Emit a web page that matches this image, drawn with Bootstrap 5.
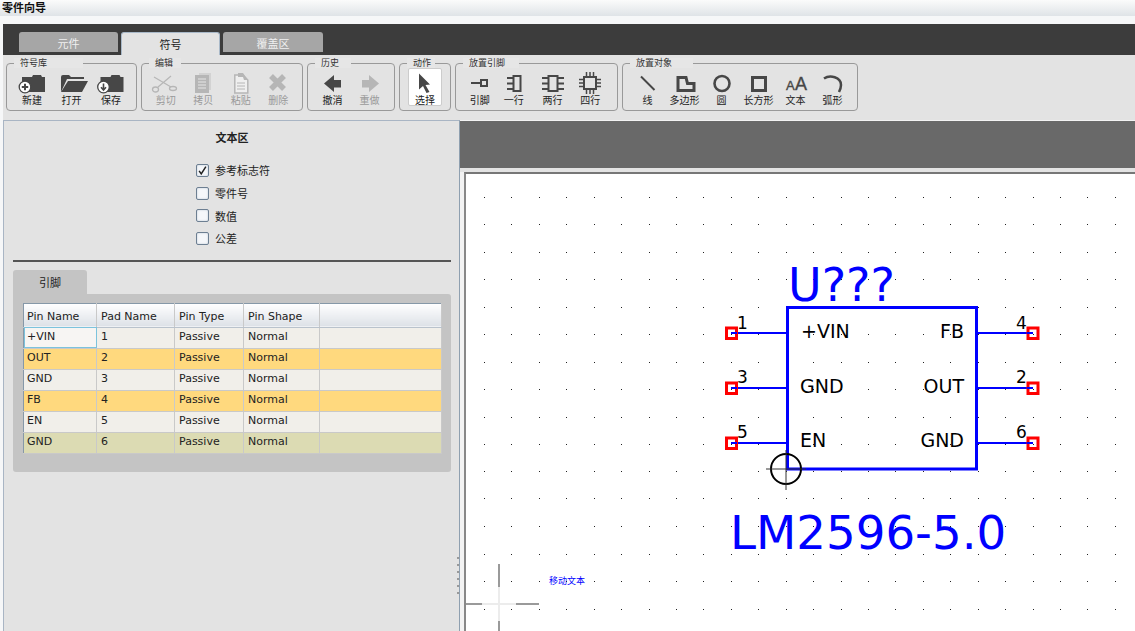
<!DOCTYPE html>
<html lang="zh">
<head>
<meta charset="utf-8">
<title>零件向导</title>
<link href="https://cdn.jsdelivr.net/npm/bootstrap@5.3.0/dist/css/bootstrap.min.css" rel="stylesheet">
<style>
html,body{height:631px;overflow:hidden}
body{background:#f6f7f8;color:#222;font:11px/1.2 "DejaVu Sans","Noto Sans CJK SC",sans-serif;-webkit-font-smoothing:antialiased}
.cjk,.tool-btn,.grp-legend,.title-bar,.tab-link,.chk-label,.panel-title{font-family:"Noto Sans CJK SC","Liberation Sans",sans-serif}
.title-bar{height:16px;line-height:15px;padding-left:2px;font-size:11px;font-weight:700;color:#111;background:linear-gradient(#fbfbfb,#dfe3e7)}
.shell{margin-top:8px;padding-left:3px;height:607px}
.tab-band{height:31px;background:#3c3c3c;padding:8px 0 0 16px;gap:3px;align-items:flex-start}
.tab-link{display:block;width:99px;height:20px;padding:0;text-align:center;line-height:22px;font-size:11px;color:#f0f0f0;background:#a6a6a6;border-radius:3px 3px 0 0}
.tab-link.cur{height:23px;background:#e3e3e3;color:#222;border:1px solid #a9b9c9;border-bottom:0}
.tab-wide{width:100px}
.tool-strip{height:65px;background:#e3e3e3;padding:3px 0 0 3px;gap:4px}
.grp{border:1px solid #999;border-radius:4px;height:53px;padding:0;display:flex;justify-content:center;min-width:0}
fieldset.grp{border:1px solid #999;padding:0;margin:0}
legend.grp-legend{float:none;margin:0 0 0 7px;padding:0 0 0 6px;font-size:9px;line-height:10px;height:10px;color:#333;background:#e6e6e6}
.tool-btn.btn{width:37px;height:38px;padding:3px 0 0;border:1px solid transparent;border-radius:2px;font-size:10px;line-height:12px;color:#222;display:flex;flex-direction:column;align-items:center;white-space:nowrap;--bs-btn-hover-bg:transparent}
.tool-btn svg{flex:none;width:30px;height:22px;overflow:visible}
.tool-btn.btn:disabled{opacity:1;color:#9a9a9a}
.tool-btn.picked{background:#fff;border-color:#ccc;width:34px}
.ink{fill:#474747}
.inkline{fill:none;stroke:#474747}
.off{fill:#b6b6b6}
.offline{fill:none;stroke:#b6b6b6}
.w40{width:39.5px!important}.w375{width:37.5px!important}
.w30{width:30px!important}.w38{width:38px!important}.w36{width:36px!important}
.workarea{height:511px;margin-top:0}
.side{width:457px;height:511px;background:#e3e3e3;border-top:1px solid #a9b5c4;border-left:1px solid #a9b5c4;border-right:1px solid #8fa0b0;flex:none;padding:0 8px 0 9px;position:relative}
.panel-title{font-size:11px;font-weight:700;text-align:center;line-height:14px;padding-top:9px;height:38px}
.chk-col{width:fit-content;margin:0 auto 0 183px}
.form-check.chk-row{height:22.7px;min-height:0;margin:0;padding:0;display:flex;align-items:center;gap:6px}
.chk-row .form-check-input{float:none;margin:0;width:13px;height:13px;border:1px solid #6d7f92;background-color:#f5f7fa;box-shadow:inset 0 0 2px #b9c4d2}
.chk-row .form-check-input[type=checkbox]{border-radius:2px}
.chk-row .form-check-input:checked{background-color:#f5f7fa;border-color:#6d7f92;background-image:url("data:image/svg+xml,%3Csvg xmlns='http://www.w3.org/2000/svg' viewBox='0 0 13 13'%3E%3Cpath d='M2.5 7l2.5 3.5L10.5 2' fill='none' stroke='%23222' stroke-width='1.8'/%3E%3C/svg%3E")}
.chk-label{font-size:11px;line-height:14px;color:#222;margin:0}
.rule{height:2px;background:#555;margin:10px 0 8px;opacity:1;border:0}
.pin-tab{display:block;width:74px;height:24px;line-height:24px;text-align:center;background:#c4c4c4;border-radius:3px 3px 0 0;font-size:11px;color:#222;padding:0}
.pin-box{background:#c4c4c4;border-radius:0 3px 3px 3px;height:178px;padding:9px 9px 0 10px}
.pin-grid.table{width:419px;table-layout:fixed;margin:0;border:1px solid #8698a8;border-collapse:collapse;font-size:11px;color:#222;--bs-table-bg:#f1efea}
.pin-grid.table>:not(caption)>*>*{padding:0 0 2px 4px;height:21px;line-height:17px;vertical-align:middle;border:1px solid #c9c9c9;border-width:0 1px 1px 0;font-weight:400;color:#222;box-shadow:none;background:var(--row-bg,#f1efea)}
.pin-grid.table>thead>tr>th{height:23px;padding:2px 0 0 4px;background:linear-gradient(#fff,#dde1e7);border-bottom:1px solid #b9c2cc;line-height:21px}
.pin-grid.table>:not(caption)>tr>:first-child{padding-left:3px}
.pin-warn{--row-bg:#ffd97e}
.pin-dup{--row-bg:#dcdbb3}
.pin-grid.table>tbody>tr>td.cell-on{background:#f7f5f3;outline:1px solid #7cc3dd;outline-offset:-1px}
.splitter{position:absolute;right:0;top:436px;width:2px;height:38px;background:repeating-linear-gradient(#9a9a9a 0 2px,transparent 2px 7px)}
.main-pane{flex:1;min-width:0;height:511px;display:flex;flex-direction:column;background:#f3f3f3}
.gray-bar{height:47px;background:#696969;flex:none;margin-top:1px}
.gap-bar{height:4px;background:#e3e3e3;flex:none}
.sheet{flex:1;margin-left:4px;background:#fff;border-left:2px solid #888;border-top:2px solid #777;overflow:hidden;min-height:0}
.sheet svg{display:block}
.lbl{font-family:"DejaVu Sans",sans-serif;fill:#000}
</style>
</head>
<body>
<div class="title-bar">零件向导</div>
<div class="shell d-flex flex-column">
  <ul class="nav tab-band flex-nowrap">
    <li class="nav-item"><a class="nav-link tab-link">元件</a></li>
    <li class="nav-item"><a class="nav-link tab-link cur">符号</a></li>
    <li class="nav-item"><a class="nav-link tab-link tab-wide">覆盖区</a></li>
  </ul>
  <div class="tool-strip d-flex">
    <fieldset class="grp" style="width:131px">
      <legend class="grp-legend" style="width:69px">符号库</legend>
      <button class="btn tool-btn w40"><svg viewBox="0 0 30 22"><path class="ink" d="M5 5h10l1-2h8l1 2h3v15H5z"/><circle cx="8" cy="15" r="5.8" fill="#fff" stroke="#474747" stroke-width="1.3"/><path class="inkline" stroke-width="2" d="M4.8 15h6.4M8 11.8v6.4"/></svg>新建</button>
      <button class="btn tool-btn w40"><svg viewBox="0 0 30 22"><path class="ink" d="M4 20V5q0-2 2-2h6l2 2h13v2H10z"/><path class="ink" d="M11 9h20l-6 11H4z"/></svg>打开</button>
      <button class="btn tool-btn w40"><svg viewBox="0 0 30 22"><path class="ink" d="M5 5h10l1-2h8l1 2h3v15H5z" transform="translate(-.5)"/><circle cx="7.500" cy="15" r="5.8" fill="#fff" stroke="#474747" stroke-width="1.300"/><path class="inkline" stroke-width="1.600" d="M7.500 11.500v6M5 15.300l2.500 2.700 2.500-2.700"/></svg>保存</button>
    </fieldset>
    <fieldset class="grp" style="width:162px">
      <legend class="grp-legend" style="width:32px">编辑</legend>
      <button class="btn tool-btn w375" disabled><svg viewBox="0 0 30 22"><path class="offline" stroke-width="1.200" d="M3 5l17 10M20 4L7 15"/><ellipse class="offline" stroke-width="1.300" cx="4.500" cy="17.500" rx="3" ry="2.500"/><ellipse class="offline" stroke-width="1.300" cx="22" cy="16.500" rx="3.500" ry="2"/></svg>剪切</button>
      <button class="btn tool-btn w375" disabled><svg viewBox="0 0 30 22"><path fill="#d2d2d2" d="M11 1h12v17H11z"/><path class="off" d="M7 3h14v18H7z"/><path stroke="#e6e6e6" d="M10 7h8M10 10h8M10 13h8M10 16h8"/></svg>拷贝</button>
      <button class="btn tool-btn w375" disabled><svg viewBox="0 0 30 22"><path fill="#efefef" stroke="#b6b6b6" stroke-width="1.500" d="M8.800 3h8l5 5v13h-13z"/><path class="off" d="M12 1h5l5 7h-4l-1-3h-5z"/><path stroke="#b6b6b6" d="M11 11h8M11 14h8M11 17h8"/></svg>粘贴</button>
      <button class="btn tool-btn w375" disabled><svg viewBox="0 0 30 22"><path class="offline" stroke-width="5.500" d="M8 4l13 13M21 4L8 17"/></svg>删除</button>
    </fieldset>
    <fieldset class="grp" style="width:88px">
      <legend class="grp-legend" style="width:36px">历史</legend>
      <button class="btn tool-btn"><svg viewBox="0 0 30 22"><path class="ink" d="M6 11.500L16 3v5h7v7.500h-7V20z"/></svg>撤消</button>
      <button class="btn tool-btn" disabled><svg viewBox="0 0 30 22"><path class="off" d="M24 11.500L14 3v5H7v7.500h7V20z"/></svg>重做</button>
    </fieldset>
    <fieldset class="grp" style="width:52px">
      <legend class="grp-legend" style="width:28px">动作</legend>
      <button class="btn tool-btn picked"><svg viewBox="0 0 30 22"><path class="ink" d="M9 1.500l11 11-4.500.5 4 7-3 1-3.500-7-4 3.500z"/></svg>选择</button>
    </fieldset>
    <fieldset class="grp" style="width:163px">
      <legend class="grp-legend" style="width:56px">放置引脚</legend>
      <button class="btn tool-btn w30"><svg viewBox="0 0 30 22"><path class="inkline" stroke-width="2" d="M6 11h9"/><rect class="inkline" stroke-width="2" x="16" y="8" width="6" height="6"/></svg>引脚</button>
      <button class="btn tool-btn w38"><svg viewBox="0 0 30 22"><rect class="inkline" stroke-width="2" x="14.500" y="4" width="7" height="15"/><path class="inkline" stroke-width="2" d="M8 6h6M8 11.500h6M8 17h6"/></svg>一行</button>
      <button class="btn tool-btn w40"><svg viewBox="0 0 30 22"><rect class="inkline" stroke-width="2" x="10.500" y="4" width="9" height="15"/><path class="inkline" stroke-width="2" d="M4 6h6M4 11.500h6M4 17h6M20 6h6M20 11.500h6M20 17h6"/></svg>两行</button>
      <button class="btn tool-btn w36"><svg viewBox="0 0 30 22"><rect class="inkline" stroke-width="2" x="9" y="5" width="12" height="12"/><path class="inkline" stroke-width="1.500" d="M4 7.500h5M4 11h5M4 14.500h5M21 7.500h5M21 11h5M21 14.500h5M11.500 0v5M15 0v5M18.500 0v5M11.500 17v5M15 17v5M18.500 17v5"/></svg>四行</button>
    </fieldset>
    <fieldset class="grp" style="width:236px">
      <legend class="grp-legend" style="width:63px">放置对象</legend>
      <button class="btn tool-btn"><svg viewBox="0 0 30 22"><path class="inkline" stroke-width="2" d="M8 4.500l13.500 13.500"/></svg>线</button>
      <button class="btn tool-btn"><svg viewBox="0 0 30 22"><path class="inkline" stroke-width="3" d="M8 5.500h8l1.500 6H24v7H8z"/></svg>多边形</button>
      <button class="btn tool-btn"><svg viewBox="0 0 30 22"><circle class="inkline" stroke-width="2.600" cx="15" cy="11.500" r="7.500"/></svg>圆</button>
      <button class="btn tool-btn"><svg viewBox="0 0 30 22"><rect class="inkline" stroke-width="3" x="8.500" y="5.500" width="13" height="13"/></svg>长方形</button>
      <button class="btn tool-btn"><svg viewBox="0 0 30 22"><text x="5" y="18" font-family="Liberation Sans" font-size="13" fill="#474747" stroke="#474747" stroke-width=".35">A</text><text x="14" y="18" font-family="Liberation Sans" font-size="18" fill="#474747" stroke="#474747" stroke-width=".35">A</text></svg>文本</button>
      <button class="btn tool-btn"><svg viewBox="0 0 30 22"><path class="inkline" stroke-width="2.500" d="M6 6.500C12 2.500 23 5 23 13c0 3-1 5-2 7"/></svg>弧形</button>
    </fieldset>
  </div>
  <div class="workarea d-flex">
    <div class="side">
      <div class="panel-title">文本区</div>
      <div class="chk-col">
        <div class="form-check chk-row"><input class="form-check-input" type="checkbox" id="c1" checked><label class="chk-label" for="c1">参考标志符</label></div>
        <div class="form-check chk-row"><input class="form-check-input" type="checkbox" id="c2"><label class="chk-label" for="c2">零件号</label></div>
        <div class="form-check chk-row"><input class="form-check-input" type="checkbox" id="c3"><label class="chk-label" for="c3">数值</label></div>
        <div class="form-check chk-row"><input class="form-check-input" type="checkbox" id="c4"><label class="chk-label" for="c4">公差</label></div>
      </div>
      <hr class="rule">
      <span class="pin-tab cjk">引脚</span>
      <div class="pin-box">
        <table class="table pin-grid">
          <colgroup><col style="width:73px"><col style="width:78px"><col style="width:69px"><col style="width:76px"><col></colgroup>
          <thead><tr><th>Pin Name</th><th>Pad Name</th><th>Pin Type</th><th>Pin Shape</th><th></th></tr></thead>
          <tbody>
            <tr><td class="cell-on">+VIN</td><td>1</td><td>Passive</td><td>Normal</td><td></td></tr>
            <tr class="pin-warn"><td>OUT</td><td>2</td><td>Passive</td><td>Normal</td><td></td></tr>
            <tr><td>GND</td><td>3</td><td>Passive</td><td>Normal</td><td></td></tr>
            <tr class="pin-warn"><td>FB</td><td>4</td><td>Passive</td><td>Normal</td><td></td></tr>
            <tr><td>EN</td><td>5</td><td>Passive</td><td>Normal</td><td></td></tr>
            <tr class="pin-dup"><td>GND</td><td>6</td><td>Passive</td><td>Normal</td><td></td></tr>
          </tbody>
        </table>
      </div>
      <div class="splitter"></div>
    </div>
    <div class="main-pane">
      <div class="gray-bar"></div>
      <div class="gap-bar"></div>
      <div class="sheet">
        <svg width="669" height="459" viewBox="466 174 669 459">
          <g stroke="#222" stroke-width="1" stroke-dasharray="1 26.43" shape-rendering="crispEdges">
            <path d="M484 197.500H1140M484 224.500H1140M484 252.500H1140M484 279.500H1140M484 307.500H1140M484 334.500H1140M484 362.500H1140M484 389.500H1140M484 417.500H1140M484 444.500H1140M484 471.500H1140M484 498.500H1140M484 526.500H1140M484 554.500H1140M484 581.500H1140M484 609.500H1140"/>
          </g>
          <rect x="787.500" y="307.500" width="189" height="161.500" fill="none" stroke="#0000ff" stroke-width="3"/>
          <g stroke="#0000ff" stroke-width="2">
            <path d="M731 333h56M731 388h56M731 443h56M977 333h56M977 388h56M977 443h56"/>
          </g>
          <g fill="none" stroke="#ff0000" stroke-width="3">
            <rect x="726.500" y="328" width="10" height="10.500"/><rect x="726.500" y="383" width="10" height="10.500"/><rect x="726.500" y="438" width="10" height="10.500"/>
            <rect x="1028" y="328" width="10" height="10.500"/><rect x="1028" y="383" width="10" height="10.500"/><rect x="1028" y="438" width="10" height="10.500"/>
          </g>
          <g stroke="#0000ff" stroke-width="2"><path d="M731 333h6M731 388h6M731 443h6M1027 333h6M1027 388h6M1027 443h6"/></g>
          <g font-size="17">
            <text class="lbl" x="737" y="329">1</text><text class="lbl" x="737" y="383">3</text><text class="lbl" x="737" y="438">5</text>
            <text class="lbl" x="1016" y="329">4</text><text class="lbl" x="1016" y="383">2</text><text class="lbl" x="1016" y="438">6</text>
          </g>
          <g font-size="19">
            <text class="lbl" x="801" y="338">+VIN</text><text class="lbl" x="800" y="393">GND</text><text class="lbl" x="800" y="447">EN</text>
            <text class="lbl" x="964" y="338" text-anchor="end">FB</text><text class="lbl" x="964" y="393" text-anchor="end">OUT</text><text class="lbl" x="964" y="447" text-anchor="end">GND</text>
          </g>
          <text x="788" y="301" font-family="DejaVu Sans" font-size="46" fill="#0000ff">U???</text>
          <text x="730" y="549" font-family="DejaVu Sans" font-size="46.700" fill="#0000ff">LM2596-5.0</text>
          <circle cx="786" cy="469" r="15" fill="none" stroke="#000" stroke-width="2"/>
          <path d="M766 469h40M786 450v40" stroke="#333" stroke-width="1"/>
          <text x="549" y="584" font-family="Noto Sans CJK SC" font-size="9" fill="#0000ff">移动文本</text>
          <path d="M465 604h17M516 604h23M499 564v23M499 621v12" stroke="#9a9a9a" stroke-width="2"/>
          <path d="M482 604h34M499 587v34" stroke="#ececec" stroke-width="2"/>
        </svg>
      </div>
    </div>
  </div>
</div>
</body>
</html>
